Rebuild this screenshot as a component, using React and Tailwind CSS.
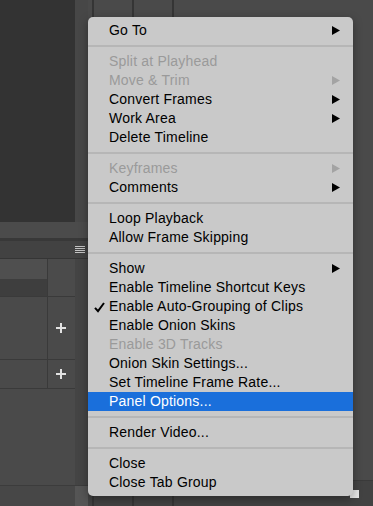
import React from "react";

const items = [
  { label: "Go To", sub: true },
  "sep",
  { label: "Split at Playhead", disabled: true },
  { label: "Move & Trim", disabled: true, sub: true },
  { label: "Convert Frames", sub: true },
  { label: "Work Area", sub: true },
  { label: "Delete Timeline" },
  "sep",
  { label: "Keyframes", disabled: true, sub: true },
  { label: "Comments", sub: true },
  "sep",
  { label: "Loop Playback" },
  { label: "Allow Frame Skipping" },
  "sep",
  { label: "Show", sub: true },
  { label: "Enable Timeline Shortcut Keys" },
  { label: "Enable Auto-Grouping of Clips", checked: true },
  { label: "Enable Onion Skins" },
  { label: "Enable 3D Tracks", disabled: true },
  { label: "Onion Skin Settings..." },
  { label: "Set Timeline Frame Rate..." },
  { label: "Panel Options...", active: true },
  "sep",
  { label: "Render Video..." },
  "sep",
  { label: "Close" },
  { label: "Close Tab Group" },
];

const Plus = () => (
  <svg width="10" height="10" viewBox="0 0 10 10">
    <path d="M5 0v10M0 5h10" stroke="#e2e2e2" strokeWidth="2" />
  </svg>
);

const MenuRow = ({ item }) => {
  const color = item.active ? "text-white" : item.disabled ? "text-[#9a9a9a]" : "text-black";
  const arrow = item.disabled ? "#a3a3a3" : item.active ? "#fff" : "#000";
  return (
    <div className={`relative flex items-center h-[19px] pl-[21px] ${item.active ? "bg-[#1a6fdb]" : ""} ${color}`}>
      {item.checked && (
        <svg className="absolute left-[6px] top-[5px]" width="11" height="11" viewBox="0 0 11 11">
          <path d="M1 5.8 L4 9.2 L10 1" fill="none" stroke="#000" strokeWidth="2" />
        </svg>
      )}
      <span className="leading-[19px] whitespace-nowrap tracking-[0.2px]">{item.label}</span>
      {item.sub && (
        <svg className="absolute right-[13px] top-[5px]" width="8" height="9" viewBox="0 0 8 9">
          <polygon points="0,0 8,4.5 0,9" fill={arrow} />
        </svg>
      )}
    </div>
  );
};

export default function App() {
  return (
    <div className="relative w-[373px] h-[506px] overflow-hidden flex bg-[#4a4a4a] font-['Liberation_Sans',Arial,sans-serif]">
      {/* left panel */}
      <div className="w-[88px] flex flex-col">
        <div className="h-[222px] flex">
          <div className="w-[75px] bg-[#333333]" />
          <div className="w-[13px] bg-[#474747]" />
        </div>
        <div className="h-[16px] bg-[#4b4b4b]" />
        <div className="h-[3px] bg-[#383838]" />
        <div className="h-[17px] bg-[#424242] flex items-center pl-[75px]">
          <div className="flex flex-col gap-[1px] w-[10px]">
            <div className="h-[1px] bg-[#c4c4c4]" />
            <div className="h-[1px] bg-[#c4c4c4]" />
            <div className="h-[1px] bg-[#c4c4c4]" />
            <div className="h-[1px] bg-[#c4c4c4]" />
          </div>
        </div>
        <div className="h-[1px] bg-[#353535]" />
        <div className="flex-1 flex">
          <div className="w-[75px] flex flex-col bg-[#4a4a4a]">
            <div className="h-[37px] flex">
              <div className="w-[47px] flex flex-col">
                <div className="h-[20px] bg-[#4f4f4f]" />
                <div className="flex-1 bg-[#3e3e3e]" />
              </div>
              <div className="w-[1px] bg-[#3a3a3a]" />
              <div className="flex-1 bg-[#4b4b4b]" />
            </div>
            <div className="h-[1px] bg-[#3a3a3a]" />
            <div className="h-[62px] flex">
              <div className="w-[47px]" />
              <div className="w-[1px] bg-[#3a3a3a]" />
              <div className="flex-1 flex items-center justify-center pr-[1px]">
                <Plus />
              </div>
            </div>
            <div className="h-[1px] bg-[#3a3a3a]" />
            <div className="h-[28px] flex">
              <div className="w-[47px]" />
              <div className="w-[1px] bg-[#3a3a3a]" />
              <div className="flex-1 flex items-center justify-center pr-[1px]">
                <Plus />
              </div>
            </div>
            <div className="h-[1px] bg-[#3a3a3a]" />
            <div className="flex-1" />
          </div>
          <div className="w-[13px] bg-[#444444]" />
        </div>
        <div className="h-[1px] bg-[#3c3c3c]" />
        <div className="h-[20px] flex">
          <div className="w-[75px] bg-[#474747]" />
          <div className="w-[13px] bg-[#555555]" />
        </div>
      </div>

      {/* timeline area */}
      <div className="flex-1 flex flex-col">
        <div className="h-[17px] flex bg-[#4a4a4a]">
          <div className="w-[4px]" />
          <div className="w-[2px] bg-[#353535]" />
          <div className="w-[38px]" />
          <div className="w-[2px] bg-[#353535]" />
          <div className="w-[38px]" />
          <div className="w-[2px] bg-[#353535]" />
        </div>
        <div className="flex-1 bg-[#4a4a4a]" />
        <div className="h-[1px] bg-[#3a3a3a]" />
        <div className="h-[25px] flex items-end bg-[#424242]">
          <div className="h-full flex">
            <div className="w-[4px]" />
            <div className="w-[2px] bg-[#353535]" />
            <div className="w-[38px]" />
            <div className="w-[2px] bg-[#353535]" />
            <div className="w-[38px]" />
            <div className="w-[2px] bg-[#353535]" />
          </div>
          <div className="flex-1 flex items-center justify-end gap-[16px] pr-[14px] pb-[8px]">
            <div className="w-[5px] h-[2px] bg-[#8a8a8a]" />
            <div className="w-[10px] h-[2px] bg-[#8a8a8a]" />
            <div className="w-[7px] h-[3px] bg-[#8a8a8a]" />
            <div className="w-[9px] h-[8px] bg-[#e6e6e6]" />
          </div>
        </div>
      </div>

      {/* context menu */}
      <div className="absolute left-[88px] top-[17px] w-[265px] py-[4px] rounded-[5px] bg-[#c9c9c9] text-[14px] shadow-[0_3px_10px_rgba(0,0,0,0.35)]">
        {items.map((item, i) =>
          item === "sep" ? (
            <div key={i} className="h-[12px] flex items-center">
              <div className="w-full h-[2px] bg-[#b6b6b6]" />
            </div>
          ) : (
            <MenuRow key={i} item={item} />
          )
        )}
      </div>
    </div>
  );
}
